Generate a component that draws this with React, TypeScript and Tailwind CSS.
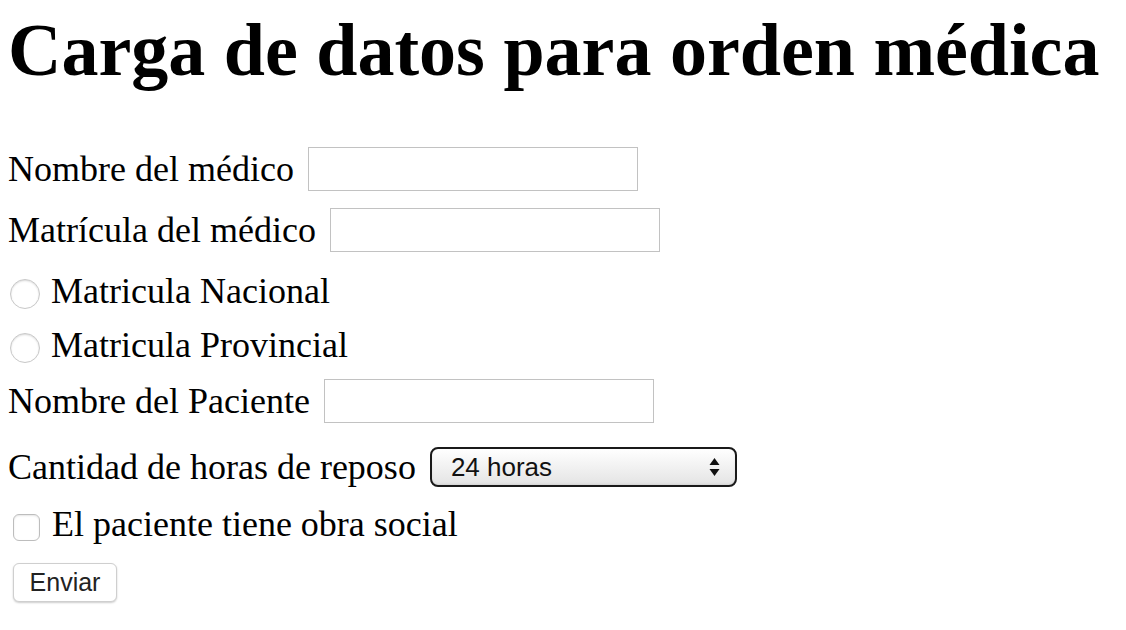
import React from "react";

function Row({ label, mb, width = 330 }: { label: string; mb: string; width?: number }) {
  return (
    <div className={"flex items-center h-[44px] " + mb}>
      <span>{label}</span>
      <div className="ml-[14px] h-[44px] border border-[#c2c2c2] bg-white" style={{ width }} />
    </div>
  );
}

function Radio({ label, mb }: { label: string; mb: string }) {
  return (
    <div className={"flex items-center h-[44px] " + mb}>
      <span className="ml-[2px] w-[30px] h-[30px] rounded-full border border-[#c8c8c8] bg-white shadow-[inset_0_1px_2px_rgba(0,0,0,0.15)] mt-[6px]" />
      <span className="ml-[11px]">{label}</span>
    </div>
  );
}

export default function App() {
  return (
    <div className="px-2 bg-white text-black min-h-[630px]" style={{ fontFamily: '"Liberation Serif", "Times New Roman", serif' }}>
      <h1 className="text-[74px] font-bold leading-[1.15] pt-[8px] mb-[54px]">Carga de datos para orden médica</h1>
      <div className="text-[36px] leading-none">
        <Row label="Nombre del médico" mb="mb-[17px]" />
        <Row label="Matrícula del médico" mb="mb-[17px]" />
        <Radio label="Matricula Nacional" mb="mb-[10px]" />
        <Radio label="Matricula Provincial" mb="mb-[12px]" />
        <Row label="Nombre del Paciente" mb="mb-[24px]" />
        <div className="flex items-center h-[40px] mb-[17px]">
          <span>Cantidad de horas de reposo</span>
          <div
            className="ml-[14px] w-[307px] h-[40px] rounded-[8px] border-2 border-[#1a1a1a] bg-gradient-to-b from-white to-[#e4e4e4] shadow-[inset_0_-1px_2px_rgba(0,0,0,0.08)] flex items-center justify-between pl-[19px] pr-[15px] text-[26px] text-[#111]"
            style={{ fontFamily: '"Liberation Sans", Arial, sans-serif' }}
          >
            <span>24 horas</span>
            <svg width="11" height="22" viewBox="0 0 11 22">
              <path d="M5.5 2 L10.5 9 L0.5 9 Z" fill="#111" />
              <path d="M5.5 20 L10.5 13 L0.5 13 Z" fill="#111" />
            </svg>
          </div>
        </div>
        <div className="flex items-center h-[40px] mb-[17px]">
          <span className="ml-[5px] w-[27px] h-[27px] rounded-[6px] border border-[#bdbdbd] bg-white shadow-[inset_0_1px_2px_rgba(0,0,0,0.1)] mt-[6px]" />
          <span className="ml-[12px]">El paciente tiene obra social</span>
        </div>
        <button
          className="ml-[5px] w-[104px] h-[39px] rounded-[6px] border border-[#cfcfcf] bg-white shadow-[0_1px_2px_rgba(0,0,0,0.2)] text-[25px] text-[#222]"
          style={{ fontFamily: '"Liberation Sans", Arial, sans-serif' }}
        >
          Enviar
        </button>
      </div>
    </div>
  );
}
